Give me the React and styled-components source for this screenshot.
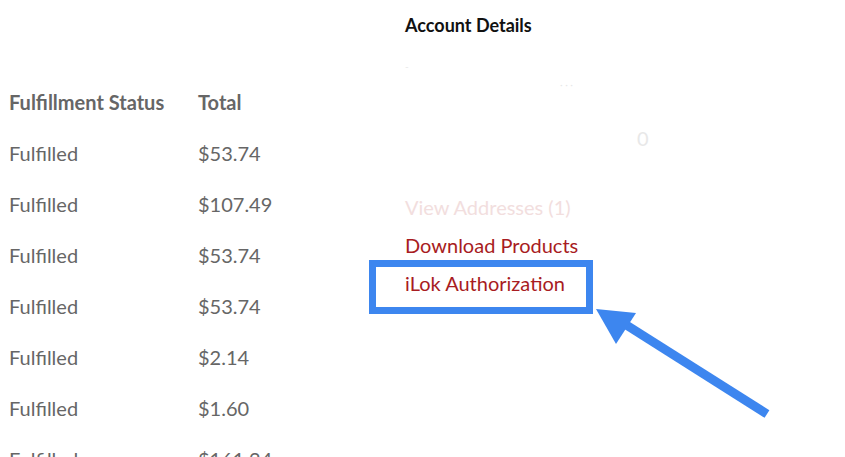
import React from 'react'
import styled, { createGlobalStyle } from 'styled-components'

const GlobalStyle = createGlobalStyle`
  html, body {
    margin: 0;
    padding: 0;
    background: #fff;
  }
  body {
    font-family: Lato, 'Open Sans', sans-serif;
  }
`

const orders = ['$53.74', '$107.49', '$53.74', '$53.74', '$2.14', '$1.60', '$161.24']

const Page = () => {
  return <Wrapper>
    <GlobalStyle />
    <Orders>
      <HeadCell>Fulfillment Status</HeadCell>
      <HeadCell>Total</HeadCell>
      {orders.map((total, i) => (
        <React.Fragment key={i}>
          <Cell>Fulfilled</Cell>
          <Cell>{total}</Cell>
        </React.Fragment>
      ))}
    </Orders>
    <Account>
      <Title>Account Details</Title>
      <Faded>
        <FadedLine>-</FadedLine>
        <FadedLine indent={155}>· · ·</FadedLine>
        <FadedLine indent={232} tall>0</FadedLine>
      </Faded>
      <Links>
        <AccountLink faded>View Addresses (1)</AccountLink>
        <AccountLink>Download Products</AccountLink>
        <AccountLink>
          iLok Authorization
          <Highlight />
        </AccountLink>
      </Links>
    </Account>
    <Arrow viewBox="0 0 845 457" width="845" height="457">
      <line x1="767" y1="414" x2="620" y2="321" stroke="#3d86ef" strokeWidth="9" />
      <polygon points="596,309 636,313 616,344" fill="#3d86ef" />
    </Arrow>
  </Wrapper>
}

const Wrapper = styled.main`
  position: relative;
  display: flex;
  width: 845px;
  height: 457px;
  overflow: hidden;
`

const Orders = styled.section`
  display: grid;
  grid-template-columns: 189px 1fr;
  grid-auto-rows: 51px;
  align-content: start;
  width: 405px;
  flex-shrink: 0;
  padding: 77px 0 0 9px;
  box-sizing: border-box;
`

const HeadCell = styled.div`
  font-size: 20px;
  font-weight: 700;
  color: #666;
  line-height: 51px;
  white-space: nowrap;
`

const Cell = styled.div`
  font-size: 20px;
  color: #666;
  line-height: 51px;
  white-space: nowrap;
`

const Account = styled.section`
  display: flex;
  flex-direction: column;
  padding-top: 15px;
`

const Title = styled.h2`
  margin: 0;
  font-size: 18px;
  font-weight: 700;
  line-height: 20px;
  color: #111;
`

const Faded = styled.div`
  display: flex;
  flex-direction: column;
  height: 153px;
  padding-top: 22px;
  box-sizing: border-box;
`

const FadedLine = styled.div`
  padding-left: ${p => p.indent || 0}px;
  margin-top: ${p => (p.tall ? 36 : 0)}px;
  font-size: ${p => (p.tall ? 20 : 10)}px;
  line-height: 18px;
  color: #e8e8e8;
`

const Links = styled.div`
  display: flex;
  flex-direction: column;
`

const AccountLink = styled.a`
  position: relative;
  font-size: 20px;
  line-height: 38px;
  color: ${p => (p.faded ? '#f2dede' : '#a81c22')};
  white-space: nowrap;
`

const Highlight = styled.span`
  position: absolute;
  left: -36px;
  top: -4px;
  width: 224px;
  height: 54px;
  border: 7px solid #3d86ef;
  box-sizing: border-box;
`

const Arrow = styled.svg`
  position: absolute;
  left: 0;
  top: 0;
  pointer-events: none;
`

export default function App() {
  return <Page />
}
